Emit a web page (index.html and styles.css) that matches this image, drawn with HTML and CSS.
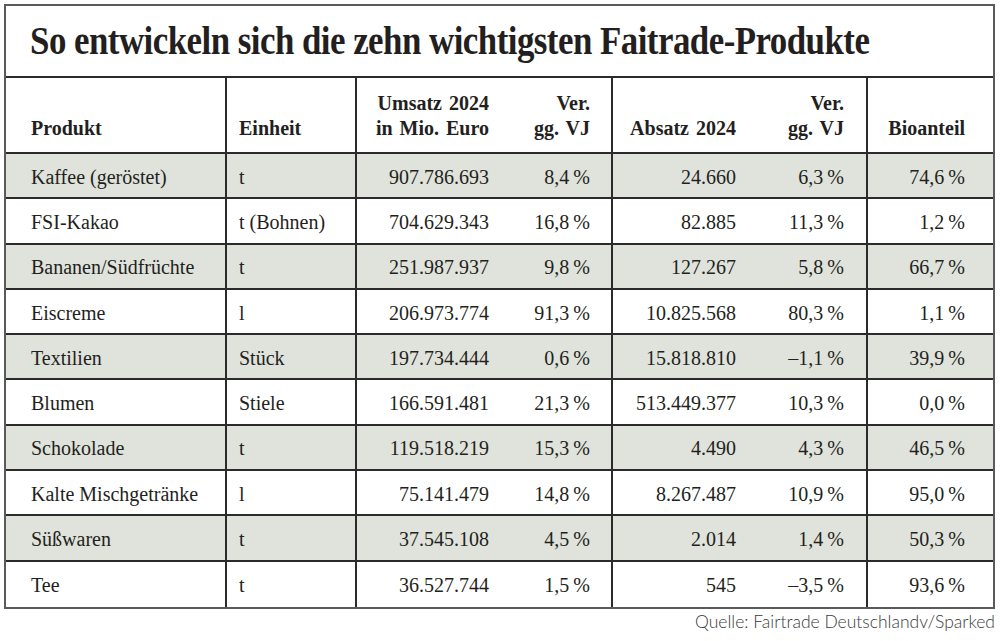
FILE: index.html
```html
<!DOCTYPE html>
<html lang="de">
<head>
<meta charset="utf-8">
<title>Faitrade-Produkte</title>
<link rel="stylesheet" href="styles.css">
</head>
<body>
<div class="chart">
  <div class="title-row"><h1 class="title">So entwickeln sich die zehn wichtigsten Faitrade-Produkte</h1></div>
  <table class="data">
    <colgroup>
      <col class="c-prod"><col class="c-unit"><col class="c-ums"><col class="c-v1"><col class="c-abs"><col class="c-v2"><col class="c-bio">
    </colgroup>
    <thead>
      <tr>
        <th class="prod">Produkt</th>
        <th class="unit">Einheit</th>
        <th class="num ums">Umsatz 2024<br>in Mio. Euro</th>
        <th class="num v1 sep">Ver.<br>gg. VJ</th>
        <th class="num abs">Absatz 2024</th>
        <th class="num v2 sep">Ver.<br>gg. VJ</th>
        <th class="num bio">Bioanteil</th>
      </tr>
    </thead>
    <tbody>
      <tr class="shade"><td class="prod">Kaffee (geröstet)</td><td class="unit">t</td><td class="num ums">907.786.693</td><td class="num v1 sep">8,4&#8239;%</td><td class="num abs">24.660</td><td class="num v2 sep">6,3&#8239;%</td><td class="num bio">74,6&#8239;%</td></tr>
      <tr><td class="prod">FSI-Kakao</td><td class="unit">t (Bohnen)</td><td class="num ums">704.629.343</td><td class="num v1 sep">16,8&#8239;%</td><td class="num abs">82.885</td><td class="num v2 sep">11,3&#8239;%</td><td class="num bio">1,2&#8239;%</td></tr>
      <tr class="shade"><td class="prod">Bananen/Südfrüchte</td><td class="unit">t</td><td class="num ums">251.987.937</td><td class="num v1 sep">9,8&#8239;%</td><td class="num abs">127.267</td><td class="num v2 sep">5,8&#8239;%</td><td class="num bio">66,7&#8239;%</td></tr>
      <tr><td class="prod">Eiscreme</td><td class="unit">l</td><td class="num ums">206.973.774</td><td class="num v1 sep">91,3&#8239;%</td><td class="num abs">10.825.568</td><td class="num v2 sep">80,3&#8239;%</td><td class="num bio">1,1&#8239;%</td></tr>
      <tr class="shade"><td class="prod">Textilien</td><td class="unit">Stück</td><td class="num ums">197.734.444</td><td class="num v1 sep">0,6&#8239;%</td><td class="num abs">15.818.810</td><td class="num v2 sep">–1,1&#8239;%</td><td class="num bio">39,9&#8239;%</td></tr>
      <tr><td class="prod">Blumen</td><td class="unit">Stiele</td><td class="num ums">166.591.481</td><td class="num v1 sep">21,3&#8239;%</td><td class="num abs">513.449.377</td><td class="num v2 sep">10,3&#8239;%</td><td class="num bio">0,0&#8239;%</td></tr>
      <tr class="shade"><td class="prod">Schokolade</td><td class="unit">t</td><td class="num ums">119.518.219</td><td class="num v1 sep">15,3&#8239;%</td><td class="num abs">4.490</td><td class="num v2 sep">4,3&#8239;%</td><td class="num bio">46,5&#8239;%</td></tr>
      <tr><td class="prod">Kalte Mischgetränke</td><td class="unit">l</td><td class="num ums">75.141.479</td><td class="num v1 sep">14,8&#8239;%</td><td class="num abs">8.267.487</td><td class="num v2 sep">10,9&#8239;%</td><td class="num bio">95,0&#8239;%</td></tr>
      <tr class="shade"><td class="prod">Süßwaren</td><td class="unit">t</td><td class="num ums">37.545.108</td><td class="num v1 sep">4,5&#8239;%</td><td class="num abs">2.014</td><td class="num v2 sep">1,4&#8239;%</td><td class="num bio">50,3&#8239;%</td></tr>
      <tr class="last"><td class="prod">Tee</td><td class="unit">t</td><td class="num ums">36.527.744</td><td class="num v1 sep">1,5&#8239;%</td><td class="num abs">545</td><td class="num v2 sep">–3,5&#8239;%</td><td class="num bio">93,6&#8239;%</td></tr>
    </tbody>
  </table>
</div>
<p class="source">Quelle: Fairtrade Deutschlandv/Sparked</p>
</body>
</html>
```

FILE: styles.css
```css
html, body {
  margin: 0;
  padding: 0;
  background: #ffffff;
}

body {
  padding: 4px 5px 0 4px;
  font-family: "Liberation Serif", "Times New Roman", serif;
  color: #231f20;
}

.chart {
  width: 991px;
  box-sizing: border-box;
  border: 2px solid #5a5a5a;
}

.title-row {
  height: 72px;
  box-sizing: border-box;
  border-bottom: 2px solid #2b2b2b;
  padding: 13px 0 0 24px;
  overflow: hidden;
}

.title {
  margin: 0;
  font-size: 39px;
  font-weight: bold;
  line-height: 44px;
  letter-spacing: -0.6px;
  white-space: nowrap;
  transform: scaleX(0.895);
  transform-origin: left center;
}

.data {
  width: 987px;
  table-layout: fixed;
  border-collapse: separate;
  border-spacing: 0;
  font-size: 20px;
}

.c-prod { width: 221px; }
.c-unit { width: 130px; }
.c-ums { width: 153px; }
.c-v1 { width: 103px; }
.c-abs { width: 147px; }
.c-v2 { width: 108px; }
.c-bio { width: 125px; }

.data th,
.data td {
  padding: 0;
  border-bottom: 2px solid #2b2b2b;
  white-space: nowrap;
}

.data th {
  height: 76px;
  box-sizing: border-box;
  vertical-align: bottom;
  padding-bottom: 11px;
  font-weight: bold;
  font-size: 20px;
  line-height: 25px;
}

.data tbody tr {
  height: 45.3px;
}

.data td {
  vertical-align: middle;
  padding-top: 3px;
}

.data tr.last td {
  border-bottom: 0;
}

.shade td {
  background: #dfe3dc;
}

.prod {
  text-align: left;
  padding-left: 25px !important;
  border-right: 2px solid #2b2b2b;
}

.unit {
  text-align: left;
  padding-left: 12px !important;
  border-right: 2px solid #2b2b2b;
}

.num {
  text-align: right;
  word-spacing: 2px;
}

.sep {
  border-right: 2px solid #2b2b2b;
}

.ums { padding-right: 21px !important; }
.v1 { padding-right: 21px !important; }
.abs { padding-right: 24px !important; }
.v2 { padding-right: 22px !important; }
.bio { padding-right: 28px !important; }

.source {
  margin: 3px 0 0 0;
  width: 991px;
  text-align: right;
  font-family: Lato, "Open Sans", sans-serif;
  font-weight: 300;
  font-size: 17.5px;
  line-height: 20px;
  color: #3a3a3a;
}
```
